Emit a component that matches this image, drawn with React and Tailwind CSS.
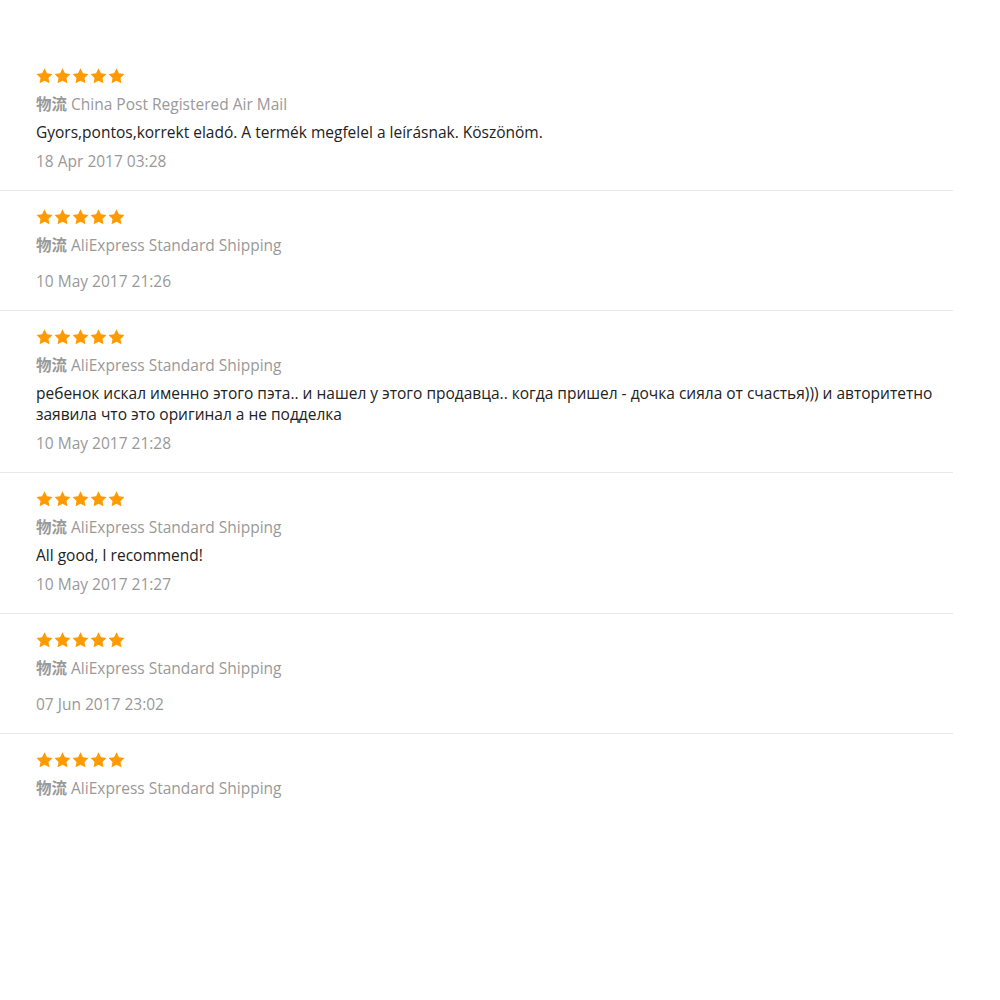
import React from "react";

const reviews = [
  { ship: "China Post Registered Air Mail", text: "Gyors,pontos,korrekt eladó. A termék megfelel a leírásnak. Köszönöm.", date: "18 Apr 2017 03:28" },
  { ship: "AliExpress Standard Shipping", text: "", date: "10 May 2017 21:26" },
  { ship: "AliExpress Standard Shipping", text: "ребенок искал именно этого пэта.. и нашел у этого продавца.. когда пришел - дочка сияла от счастья))) и авторитетно заявила что это оригинал а не подделка", date: "10 May 2017 21:28" },
  { ship: "AliExpress Standard Shipping", text: "All good, I recommend!", date: "10 May 2017 21:27" },
  { ship: "AliExpress Standard Shipping", text: "", date: "07 Jun 2017 23:02" },
  { ship: "AliExpress Standard Shipping", text: null, date: null },
];

function Star() {
  return (
    <svg width="17" height="16" viewBox="0 0 24 23" className="block">
      <path d="M12 0.5l3.5 7.2 7.9 1.1-5.7 5.5 1.4 7.8L12 18.4l-7.1 3.7 1.4-7.8L0.6 8.8l7.9-1.1z" fill="#ff9a00" />
    </svg>
  );
}

function Stars() {
  return (
    <div className="flex gap-[1px] h-4 items-center">
      {[0, 1, 2, 3, 4].map((i) => (
        <Star key={i} />
      ))}
    </div>
  );
}

export default function App() {
  return (
    <div
      className="w-[1000px] h-[1000px] bg-white pt-[50px]"
      style={{ fontFamily: '"Open Sans", "Noto Sans CJK SC", sans-serif' }}
    >
      <div className="w-[953px]">
        {reviews.map((r, i) => (
          <div
            key={i}
            className={`pl-9 pr-3 pt-[18px] pb-[19px] ${i < reviews.length - 1 ? "border-b border-[#e8e8e8]" : ""}`}
          >
            <Stars />
            <div className="mt-[9px] flex flex-col gap-2">
              <div className="text-[15.5px] leading-5 text-[#999]">
                <span className="font-bold text-[#999]" style={{ fontFamily: '"Noto Sans CJK SC", sans-serif' }}>物流</span>{" "}
                {r.ship}
              </div>
              {r.text !== null && (
                <div className="text-[15.5px] leading-[21px] text-[#222]">{r.text}</div>
              )}
              {r.date && <div className="text-[15.5px] leading-5 text-[#999]">{r.date}</div>}
            </div>
          </div>
        ))}
      </div>
    </div>
  );
}
